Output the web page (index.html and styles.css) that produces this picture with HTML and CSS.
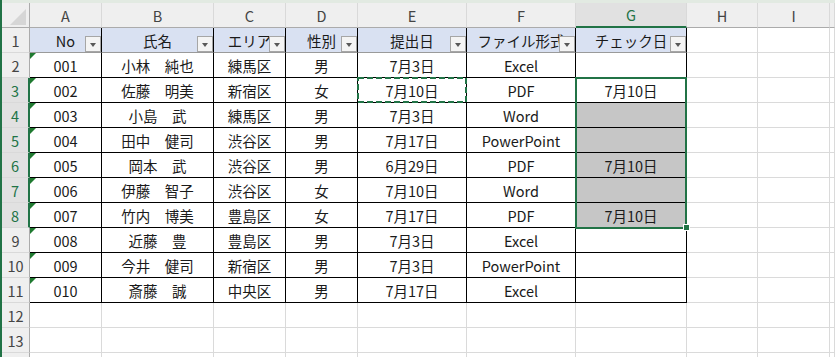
FILE: index.html
```html
<!DOCTYPE html>
<html lang="ja">
<head>
<meta charset="utf-8">
<title>Sheet</title>
<link rel="stylesheet" href="styles.css">
</head>
<body>
<div class="frame">
  <div class="strip"></div>
  <div class="grid">
    <!-- column headers -->
    <div class="ch corner"><span class="corner-tri"></span></div>
    <div class="ch">A</div><div class="ch">B</div><div class="ch">C</div><div class="ch">D</div><div class="ch">E</div><div class="ch">F</div><div class="ch ch-sel">G</div><div class="ch">H</div><div class="ch">I</div><div class="ch"></div>

    <!-- row 1 -->
    <div class="rh">1</div>
    <div class="c th">No<span class="fb"></span></div>
    <div class="c th">氏名<span class="fb"></span></div>
    <div class="c th">エリア<span class="fb"></span></div>
    <div class="c th">性別<span class="fb"></span></div>
    <div class="c th">提出日<span class="fb"></span></div>
    <div class="c th">ファイル形式<span class="fb"></span></div>
    <div class="c th">チェック日<span class="fb"></span></div>
    <div class="c"></div><div class="c"></div><div class="c"></div>

    <!-- row 2 -->
    <div class="rh">2</div>
    <div class="c d tri">001</div><div class="c d">小林　純也</div><div class="c d">練馬区</div><div class="c d">男</div><div class="c d">7月3日</div><div class="c d">Excel</div><div class="c d"></div>
    <div class="c"></div><div class="c"></div><div class="c"></div>

    <!-- row 3 -->
    <div class="rh rh-sel">3</div>
    <div class="c d tri">002</div><div class="c d">佐藤　明美</div><div class="c d">新宿区</div><div class="c d">女</div><div class="c d">7月10日</div><div class="c d">PDF</div><div class="c d">7月10日</div>
    <div class="c"></div><div class="c"></div><div class="c"></div>

    <!-- row 4 -->
    <div class="rh rh-sel">4</div>
    <div class="c d tri">003</div><div class="c d">小島　武</div><div class="c d">練馬区</div><div class="c d">男</div><div class="c d">7月3日</div><div class="c d">Word</div><div class="c d sel"></div>
    <div class="c"></div><div class="c"></div><div class="c"></div>

    <!-- row 5 -->
    <div class="rh rh-sel">5</div>
    <div class="c d tri">004</div><div class="c d">田中　健司</div><div class="c d">渋谷区</div><div class="c d">男</div><div class="c d">7月17日</div><div class="c d">PowerPoint</div><div class="c d sel"></div>
    <div class="c"></div><div class="c"></div><div class="c"></div>

    <!-- row 6 -->
    <div class="rh rh-sel">6</div>
    <div class="c d tri">005</div><div class="c d">岡本　武</div><div class="c d">渋谷区</div><div class="c d">男</div><div class="c d">6月29日</div><div class="c d">PDF</div><div class="c d sel">7月10日</div>
    <div class="c"></div><div class="c"></div><div class="c"></div>

    <!-- row 7 -->
    <div class="rh rh-sel">7</div>
    <div class="c d tri">006</div><div class="c d">伊藤　智子</div><div class="c d">渋谷区</div><div class="c d">女</div><div class="c d">7月10日</div><div class="c d">Word</div><div class="c d sel"></div>
    <div class="c"></div><div class="c"></div><div class="c"></div>

    <!-- row 8 -->
    <div class="rh rh-sel">8</div>
    <div class="c d tri">007</div><div class="c d">竹内　博美</div><div class="c d">豊島区</div><div class="c d">女</div><div class="c d">7月17日</div><div class="c d">PDF</div><div class="c d sel">7月10日</div>
    <div class="c"></div><div class="c"></div><div class="c"></div>

    <!-- row 9 -->
    <div class="rh">9</div>
    <div class="c d tri">008</div><div class="c d">近藤　豊</div><div class="c d">豊島区</div><div class="c d">男</div><div class="c d">7月3日</div><div class="c d">Excel</div><div class="c d"></div>
    <div class="c"></div><div class="c"></div><div class="c"></div>

    <!-- row 10 -->
    <div class="rh">10</div>
    <div class="c d tri">009</div><div class="c d">今井　健司</div><div class="c d">新宿区</div><div class="c d">男</div><div class="c d">7月3日</div><div class="c d">PowerPoint</div><div class="c d"></div>
    <div class="c"></div><div class="c"></div><div class="c"></div>

    <!-- row 11 -->
    <div class="rh">11</div>
    <div class="c d tri">010</div><div class="c d">斎藤　誠</div><div class="c d">中央区</div><div class="c d">男</div><div class="c d">7月17日</div><div class="c d">Excel</div><div class="c d"></div>
    <div class="c"></div><div class="c"></div><div class="c"></div>

    <!-- row 12 -->
    <div class="rh">12</div>
    <div class="c"></div><div class="c"></div><div class="c"></div><div class="c"></div><div class="c"></div><div class="c"></div><div class="c"></div><div class="c"></div><div class="c"></div><div class="c"></div>

    <!-- row 13 -->
    <div class="rh">13</div>
    <div class="c"></div><div class="c"></div><div class="c"></div><div class="c"></div><div class="c"></div><div class="c"></div><div class="c"></div><div class="c"></div><div class="c"></div><div class="c"></div>

    <!-- row 14 (only its top edge is in view) -->
    <div class="rh"></div>
    <div class="c"></div><div class="c"></div><div class="c"></div><div class="c"></div><div class="c"></div><div class="c"></div><div class="c"></div><div class="c"></div><div class="c"></div><div class="c"></div>

    <!-- overlays -->
    <svg class="copy-ants" width="110" height="26" viewBox="0 0 110 26">
      <rect x="1" y="1" width="108" height="24" fill="none" stroke="#217346" stroke-width="2" stroke-dasharray="6 3"/>
    </svg>
    <div class="selection"></div>
    <div class="handle"></div>
  </div>
</div>
</body>
</html>
```

FILE: styles.css
```css
* { box-sizing: border-box; }

html, body {
  margin: 0;
  padding: 0;
  background: #ffffff;
}

body {
  width: 835px;
  height: 357px;
  overflow: hidden;
  font-family: "Noto Sans CJK JP", "Noto Sans", sans-serif;
  font-size: 14.5px;
  color: #1a1a1a;
}

.frame {
  border-left: 2px solid #217346;
  height: 357px;
  overflow: hidden;
}

.strip {
  height: 3px;
  background: #e2eae2;
}

.grid {
  position: relative;
  display: grid;
  grid-template-columns: 28px 72px 112px 72px 72px 109px 109px 111px 71px 72px 1fr;
  grid-auto-rows: 25px;
}

.ch {
  background: #efefef;
  border-right: 1px solid #d9d9d9;
  border-bottom: 1px solid #ababab;
  color: #444;
  display: flex;
  align-items: center;
  justify-content: center;
}

.ch.corner {
  position: relative;
  border-right: 1px solid #ababab;
}

.corner-tri {
  position: absolute;
  right: 3px;
  bottom: 2px;
  width: 0;
  height: 0;
  border-left: 16px solid transparent;
  border-bottom: 16px solid #d6d6d6;
}

.ch-sel {
  background: #e1e1e1;
  color: #217346;
  border-bottom: 2px solid #217346;
}

.rh {
  background: #efefef;
  border-right: 1px solid #ababab;
  border-bottom: 1px solid #d9d9d9;
  color: #444;
  display: flex;
  align-items: center;
  justify-content: center;
  padding-top: 1px;
}

.rh-sel {
  background: #e1e1e1;
  color: #217346;
  border-right: 2px solid #217346;
}

.c {
  position: relative;
  border-right: 1px solid #dadada;
  border-bottom: 1px solid #dadada;
  display: flex;
  align-items: center;
  justify-content: center;
  white-space: nowrap;
  overflow: hidden;
  padding-top: 1px;
}

.c.th {
  background: #d9e1f2;
  border-right: 1px solid #000;
  border-bottom: 1px solid #9a9a9a;
}

.c.d {
  border-right: 1px solid #000;
  border-bottom: 1px solid #000;
}

.c.sel {
  background: #c6c6c6;
}

.tri::before {
  content: "";
  position: absolute;
  top: 0;
  left: 0;
  width: 0;
  height: 0;
  border-top: 6px solid #1f7a30;
  border-right: 6px solid transparent;
}

.fb {
  position: absolute;
  right: 0;
  bottom: 0;
  width: 16px;
  height: 16px;
  background: #f4f4f4;
  border: 1px solid #a6a6a6;
}

.fb::after {
  content: "";
  position: absolute;
  left: 4px;
  top: 6px;
  width: 0;
  height: 0;
  border-left: 3.5px solid transparent;
  border-right: 3.5px solid transparent;
  border-top: 4px solid #595959;
}

.copy-ants {
  position: absolute;
  left: 355px;
  top: 74px;
  display: block;
}

.selection {
  position: absolute;
  left: 573px;
  top: 74px;
  width: 112px;
  height: 152px;
  border: 2px solid #217346;
  pointer-events: none;
}

.handle {
  position: absolute;
  left: 681px;
  top: 221px;
  width: 7px;
  height: 7px;
  background: #217346;
  border: 1px solid #ffffff;
}
```
